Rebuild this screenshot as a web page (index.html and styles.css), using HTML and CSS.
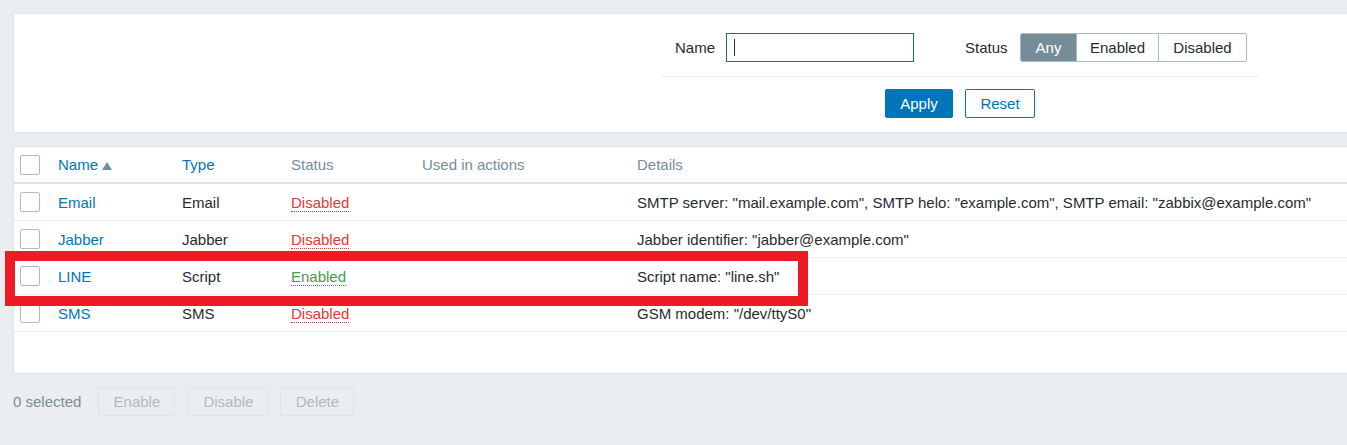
FILE: index.html
```html
<!DOCTYPE html>
<html>
<head>
<meta charset="utf-8">
<link rel="stylesheet" href="styles.css">
</head>
<body>
<div class="viewport">
<div class="wrap">
  <div class="panel filter">
    <div class="filter-row">
      <label class="flabel">Name</label>
      <div class="input"><span class="caret"></span></div>
      <label class="flabel status-label">Status</label>
      <div class="seg">
        <span class="seg-btn active">Any</span>
        <span class="seg-btn">Enabled</span>
        <span class="seg-btn">Disabled</span>
      </div>
    </div>
    <div class="filter-buttons">
      <button class="btn primary">Apply</button>
      <button class="btn alt">Reset</button>
    </div>
  </div>

  <div class="panel list">
    <table class="tbl">
      <colgroup>
        <col class="c-check"><col class="c-name"><col class="c-type"><col class="c-status"><col class="c-used"><col>
      </colgroup>
      <thead>
        <tr>
          <th><span class="cb"></span></th>
          <th><span class="link">Name</span><svg class="sort" width="10" height="8" viewBox="0 0 10 8"><path d="M0 8 L5 0 L10 8 Z" fill="#768d99"/></svg></th>
          <th><span class="link">Type</span></th>
          <th>Status</th>
          <th>Used in actions</th>
          <th>Details</th>
        </tr>
      </thead>
      <tbody>
        <tr>
          <td><span class="cb"></span></td>
          <td><span class="link">Email</span></td>
          <td>Email</td>
          <td><span class="st off">Disabled</span></td>
          <td></td>
          <td>SMTP server: "mail.example.com", SMTP helo: "example.com", SMTP email: "zabbix@example.com"</td>
        </tr>
        <tr>
          <td><span class="cb"></span></td>
          <td><span class="link">Jabber</span></td>
          <td>Jabber</td>
          <td><span class="st off">Disabled</span></td>
          <td></td>
          <td>Jabber identifier: "jabber@example.com"</td>
        </tr>
        <tr>
          <td><span class="cb"></span></td>
          <td><span class="link">LINE</span></td>
          <td>Script</td>
          <td><span class="st on">Enabled</span></td>
          <td></td>
          <td>Script name: "line.sh"</td>
        </tr>
        <tr>
          <td><span class="cb"></span></td>
          <td><span class="link">SMS</span></td>
          <td>SMS</td>
          <td><span class="st off">Disabled</span></td>
          <td></td>
          <td>GSM modem: "/dev/ttyS0"</td>
        </tr>
      </tbody>
    </table>
  </div>

  <div class="footer">
    <span class="selected">0 selected</span>
    <button class="btn dis">Enable</button>
    <button class="btn dis">Disable</button>
    <button class="btn dis">Delete</button>
  </div>

  <div class="highlight"></div>
</div>
</div>
</body>
</html>
```

FILE: styles.css
```css
html, body {
  margin: 0;
  padding: 0;
}
body {
  background: #ebeef0;
  font-family: "Liberation Sans", Arial, sans-serif;
  font-size: 15px;
  color: #1f2c33;
  overflow: hidden;
}
.viewport {
  width: 1347px;
  height: 445px;
  overflow: hidden;
}
.wrap {
  position: relative;
  width: 1894px;
  padding: 13px 0 0 13px;
}
.panel {
  background: #fff;
  border: 1px solid #dfe4e7;
  box-sizing: border-box;
}
.filter {
  height: 120px;
  display: flex;
  flex-direction: column;
  align-items: center;
}
.filter-row {
  width: 598px;
  box-sizing: border-box;
  display: flex;
  align-items: center;
  padding: 19px 12px 14px 14px;
  border-bottom: 1px solid #ebeef0;
}
.flabel {
  margin-right: 11px;
}
.status-label {
  margin-left: 51px;
  margin-right: 12px;
}
.input {
  width: 188px;
  height: 29px;
  box-sizing: border-box;
  border: 1px solid #1f65a0;
  display: flex;
  align-items: center;
  padding-left: 7px;
}
.caret {
  width: 1px;
  height: 17px;
  background: #1f2c33;
}
.seg {
  display: flex;
  height: 29px;
  border: 1px solid #acbbc2;
  border-radius: 2px;
  box-sizing: border-box;
  overflow: hidden;
  margin-left: auto;
}
.seg-btn {
  display: flex;
  align-items: center;
  justify-content: center;
  border-left: 1px solid #acbbc2;
  color: #1f2c33;
  box-sizing: border-box;
  padding: 0;
}
.seg-btn:first-child {
  border-left: none;
}
.seg-btn.active {
  background: #768d99;
  color: #fff;
  width: 55px;
}
.seg-btn:nth-child(2) { width: 82px; }
.seg-btn:nth-child(3) { flex: 1; width: 88px; }
.filter-buttons {
  display: flex;
  gap: 12px;
  margin-top: 12px;
}
.btn {
  font-family: "Liberation Sans", Arial, sans-serif;
  font-size: 15px;
  height: 29px;
  box-sizing: border-box;
  border-radius: 2px;
  padding: 0 14px;
  margin: 0;
}
.btn.primary {
  background: #0275b8;
  border: 1px solid #0275b8;
  color: #fff;
  width: 68px;
}
.btn.alt {
  background: #fff;
  border: 1px solid #0275b8;
  color: #0275b8;
  width: 70px;
}
.list {
  margin-top: 13px;
  height: 228px;
}
.tbl {
  border-collapse: collapse;
  table-layout: fixed;
  width: 100%;
}
.c-check { width: 38px; }
.c-name { width: 124px; }
.c-type { width: 109px; }
.c-status { width: 131px; }
.c-used { width: 215px; }
.tbl th {
  font-weight: normal;
  text-align: left;
  color: #768d99;
  height: 35px;
  padding: 0 0 0 6px;
  border-bottom: 2px solid #dfe4e7;
  white-space: nowrap;
  vertical-align: middle;
}
.tbl td {
  height: 36px;
  padding: 0 0 0 6px;
  border-bottom: 1px solid #ebeef0;
  white-space: nowrap;
  vertical-align: middle;
}
.cb {
  display: block;
  width: 20px;
  height: 20px;
  box-sizing: border-box;
  border: 1px solid #acbbc2;
  border-radius: 2px;
  background: #fff;
}
.link {
  color: #0275b8;
}
.sort {
  margin-left: 4px;
  vertical-align: 0;
}
.st {
  border-bottom: 1px dotted;
}
.st.off { color: #e33734; }
.st.on { color: #429e47; }
.footer {
  display: flex;
  align-items: center;
  margin-top: 13px;
}
.selected {
  color: #768d99;
  margin-right: 17px;
}
.btn.dis {
  background: #ebeef0;
  border: 1px solid #dfe4e7;
  color: #acbbc2;
  margin-right: 12px;
  padding: 0;
}
.btn.dis:nth-of-type(1) { width: 77px; margin-right: 13px; }
.btn.dis:nth-of-type(2) { width: 80px; }
.btn.dis:nth-of-type(3) { width: 74px; }
.highlight {
  position: absolute;
  left: 5px;
  top: 251px;
  width: 803px;
  height: 55px;
  box-sizing: border-box;
  border: 10px solid #ed1c24;
}
```
